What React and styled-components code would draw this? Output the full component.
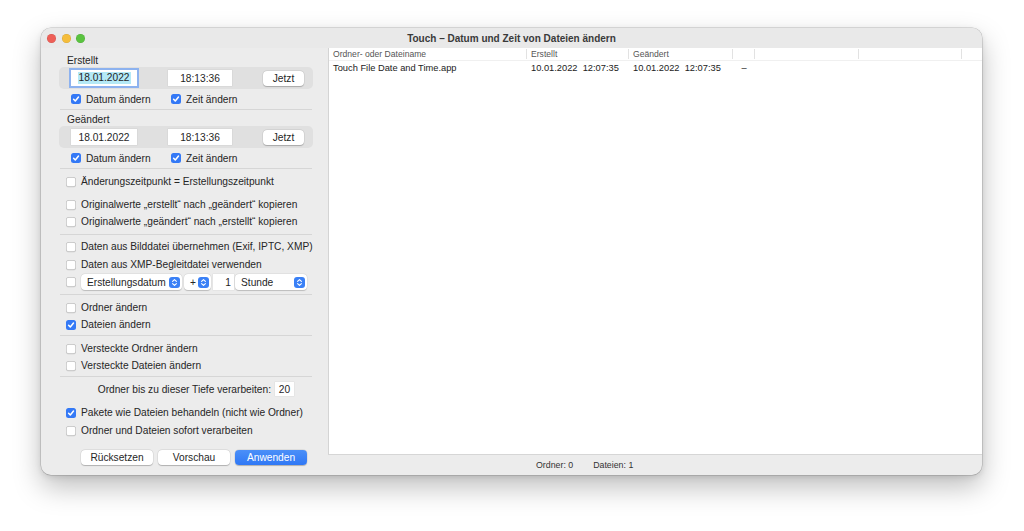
import React from "react";
import styled, { createGlobalStyle } from "styled-components";

const GlobalStyle = createGlobalStyle`
  html, body {
    margin: 0;
    background: #ffffff;
    font-family: "Liberation Sans", Arial, sans-serif;
    color: #262626;
  }
  * { box-sizing: border-box; }
`;

const Page = styled.div`
  width: 1024px;
  height: 531px;
  padding: 28px 0 0 41px;
`;

const Window = styled.div`
  width: 941px;
  height: 447px;
  border-radius: 10px;
  background: #ececec;
  overflow: hidden;
  display: flex;
  flex-direction: column;
  box-shadow: 0 0 0 0.5px rgba(0, 0, 0, 0.22), 0 12px 28px rgba(0, 0, 0, 0.26),
    0 2px 6px rgba(0, 0, 0, 0.1);
`;

const TitleBar = styled.div`
  height: 20px;
  flex: none;
  display: grid;
  grid-template-columns: 1fr auto 1fr;
  align-items: center;
  background: #e9e9e9;
`;

const Lights = styled.div`
  display: flex;
  gap: 5.5px;
  padding-left: 6px;
`;

const Light = styled.span`
  width: 9px;
  height: 9px;
  border-radius: 50%;
  background: ${(p) => p.$color};
  box-shadow: inset 0 0 0 0.5px rgba(0, 0, 0, 0.12);
`;

const Title = styled.div`
  font-size: 10px;
  font-weight: bold;
  color: #3a3a3a;
`;

const Body = styled.div`
  flex: 1;
  display: flex;
  min-height: 0;
`;

const LeftPanel = styled.div`
  width: 287px;
  flex: none;
  padding: 6px 16px 0 19px;
  display: flex;
  flex-direction: column;
  font-size: 10.2px;
`;

const Group = styled.div`
  display: flex;
  flex-direction: column;
  padding-top: ${(p) => p.$pt || 0}px;
  padding-bottom: ${(p) => p.$pb || 0}px;
`;

const Spacer = styled.div`
  height: ${(p) => p.$h}px;
  flex: none;
`;

const Separator = styled.div`
  height: 1px;
  background: #d6d6d6;
  flex: none;
`;

const SectionLabel = styled.div`
  height: 13px;
  line-height: 13px;
  padding-left: 7px;
  margin-top: ${(p) => p.$mt || 0}px;
`;

const FieldBox = styled.div`
  height: 22px;
  margin: 0 -1px;
  background: #e0e0e0;
  border-radius: 5px;
  display: flex;
  align-items: center;
  justify-content: space-between;
  padding: 0 9px 0 12px;
`;

const Field = styled.span`
  width: ${(p) => p.$w}px;
  height: ${(p) => p.$h || 16}px;
  flex: none;
  margin-left: ${(p) => p.$ml || 0}px;
  background: #ffffff;
  display: flex;
  align-items: center;
  justify-content: ${(p) => p.$align || "center"};
  padding: 0 3px;
  font-size: 10.2px;
  color: #1f1f1f;
  box-shadow: ${(p) =>
    p.$focus ? "0 0 0 2px #8db2ef" : "0 0 0 0.5px rgba(0, 0, 0, 0.06)"};
`;

const Selected = styled.span`
  background: #b4e9f6;
  padding: 0 1px;
  line-height: 12px;
`;

const PushButton = styled.span`
  width: ${(p) => p.$w || 41}px;
  height: ${(p) => p.$h || 15}px;
  border-radius: 4px;
  display: flex;
  align-items: center;
  justify-content: center;
  font-size: 10.2px;
  background: ${(p) =>
    p.$primary ? "linear-gradient(#4b8ff8, #2f78f5)" : "#ffffff"};
  color: ${(p) => (p.$primary ? "#ffffff" : "#262626")};
  box-shadow: 0 0.5px 1px rgba(0, 0, 0, 0.22), 0 0 0 0.5px rgba(0, 0, 0, 0.08);
`;

const DateChecks = styled.div`
  height: 20px;
  display: grid;
  grid-template-columns: 100px auto;
  align-items: center;
  padding-left: 11px;
`;

const CheckRow = styled.div`
  height: 17px;
  margin-top: ${(p) => p.$mt || 0}px;
  display: flex;
  align-items: center;
  gap: 5px;
  padding-left: 6px;
  white-space: nowrap;
`;

const CheckLabel = styled.label`
  display: flex;
  align-items: center;
  gap: 5px;
`;

const Box = styled.span`
  width: 10px;
  height: 10px;
  flex: none;
  border-radius: 2.5px;
  display: inline-flex;
  align-items: center;
  justify-content: center;
  background: ${(p) => (p.$checked ? "#3479f6" : "#ffffff")};
  box-shadow: ${(p) =>
    p.$checked
      ? "none"
      : "inset 0 0 0 0.7px #bdbdbd, 0 0.5px 0.5px rgba(0,0,0,0.08)"};
`;

const Select = styled.span`
  width: ${(p) => p.$w}px;
  height: 16px;
  flex: none;
  margin-left: ${(p) => p.$ml || 0}px;
  background: #ffffff;
  border-radius: 4px;
  display: flex;
  align-items: center;
  justify-content: space-between;
  padding: 0 2px 0 6px;
  box-shadow: 0 0.5px 1px rgba(0, 0, 0, 0.18), 0 0 0 0.5px rgba(0, 0, 0, 0.06);
`;

const Stepper = styled.span`
  width: 11px;
  height: 11px;
  border-radius: 3px;
  background: #3a80f6;
  display: inline-flex;
  align-items: center;
  justify-content: center;
`;

const PopupRow = styled.div`
  height: 18px;
  display: flex;
  align-items: center;
  padding-left: 6px;
`;

const DepthRow = styled.div`
  height: 18px;
  display: flex;
  align-items: center;
  justify-content: flex-end;
  gap: 4px;
  padding-right: 18px;
`;

const ButtonRow = styled.div`
  display: flex;
  gap: 5px;
  padding-left: 21px;
  margin-top: 11px;
`;

const RightPanel = styled.div`
  flex: 1;
  display: flex;
  flex-direction: column;
  min-width: 0;
`;

const Table = styled.div`
  flex: 1;
  background: #ffffff;
  border-left: 1px solid #d4d4d4;
  border-bottom: 1px solid #d6d6d6;
`;

const COLS = "198px 102px 104px 22px 104px 103px 1fr";

const HeaderRow = styled.div`
  display: grid;
  grid-template-columns: ${COLS};
  height: 13px;
  align-items: center;
  font-size: 8.6px;
  color: #555555;
  border-bottom: 1px solid #f0f0f0;
`;

const HeaderCell = styled.div`
  height: 10px;
  line-height: 10px;
  padding-left: 4px;
  border-right: ${(p) => (p.$last ? "none" : "1px solid #e2e2e2")};
  white-space: nowrap;
  overflow: hidden;
`;

const DataRow = styled.div`
  display: grid;
  grid-template-columns: ${COLS};
  height: 13px;
  align-items: center;
  font-size: 9.3px;
  color: #222222;
`;

const Cell = styled.div`
  padding-left: ${(p) => (p.$center ? 0 : 4)}px;
  white-space: pre;
  text-align: ${(p) => (p.$center ? "center" : "left")};
`;

const StatusBar = styled.div`
  height: 20px;
  flex: none;
  display: flex;
  align-items: center;
  gap: 20px;
  padding-left: 208px;
  font-size: 8.8px;
  color: #333333;
`;

function Check({ checked }) {
  return (
    <Box $checked={checked}>
      {checked && (
        <svg width="10" height="10" viewBox="0 0 10 10">
          <path
            d="M2.6 5.2 L4.3 7 L7.5 3.1"
            fill="none"
            stroke="#ffffff"
            strokeWidth="1.5"
            strokeLinecap="round"
            strokeLinejoin="round"
          />
        </svg>
      )}
    </Box>
  );
}

function StepIcon() {
  return (
    <Stepper>
      <svg width="11" height="11" viewBox="0 0 11 11">
        <path
          d="M3.6 4.4 L5.5 2.6 L7.4 4.4 M3.6 6.6 L5.5 8.4 L7.4 6.6"
          fill="none"
          stroke="#ffffff"
          strokeWidth="1.1"
          strokeLinecap="round"
          strokeLinejoin="round"
        />
      </svg>
    </Stepper>
  );
}

function DateSection({ label, focus, mt }) {
  return (
    <>
      <SectionLabel $mt={mt}>{label}</SectionLabel>
      <FieldBox>
        <Field $w={66} $focus={focus}>
          {focus ? <Selected>18.01.2022</Selected> : "18.01.2022"}
        </Field>
        <Field $w={64}>18:13:36</Field>
        <PushButton>Jetzt</PushButton>
      </FieldBox>
      <DateChecks>
        <CheckLabel>
          <Check checked />
          Datum ändern
        </CheckLabel>
        <CheckLabel>
          <Check checked />
          Zeit ändern
        </CheckLabel>
      </DateChecks>
    </>
  );
}

function Option({ checked, children, mt }) {
  return (
    <CheckRow $mt={mt}>
      <Check checked={checked} />
      {children}
    </CheckRow>
  );
}

export default function App() {
  return (
    <>
      <GlobalStyle />
      <Page>
        <Window>
          <TitleBar>
            <Lights>
              <Light $color="#ee5f57" />
              <Light $color="#f5bd3b" />
              <Light $color="#5ac33f" />
            </Lights>
            <Title>Touch – Datum und Zeit von Dateien ändern</Title>
            <div />
          </TitleBar>
          <Body>
            <LeftPanel>
              <Group>
                <DateSection label="Erstellt" focus />
              </Group>
              <Separator />
              <Group>
                <DateSection label="Geändert" mt={3} />
              </Group>
              <Separator />
              <Group $pt={4} $pb={4}>
                <Option>Änderungszeitpunkt = Erstellungszeitpunkt</Option>
                <Spacer $h={6} />
                <Option>Originalwerte „erstellt“ nach „geändert“ kopieren</Option>
                <Option>Originalwerte „geändert“ nach „erstellt“ kopieren</Option>
              </Group>
              <Separator />
              <Group $pt={3} $pb={3}>
                <Option>Daten aus Bilddatei übernehmen (Exif, IPTC, XMP)</Option>
                <Option mt={1}>Daten aus XMP-Begleitdatei verwenden</Option>
                <PopupRow>
                  <Check />
                  <Select $w={101} $ml={5}>
                    Erstellungsdatum
                    <StepIcon />
                  </Select>
                  <Select $w={27} $ml={2}>
                    +
                    <StepIcon />
                  </Select>
                  <Field $w={21} $ml={2} $align="flex-end">
                    1
                  </Field>
                  <Select $w={72} $ml={1}>
                    Stunde
                    <StepIcon />
                  </Select>
                </PopupRow>
              </Group>
              <Separator />
              <Group $pt={4} $pb={2}>
                <Option>Ordner ändern</Option>
                <Option checked>Dateien ändern</Option>
              </Group>
              <Separator />
              <Group $pt={4} $pb={2}>
                <Option>Versteckte Ordner ändern</Option>
                <Option>Versteckte Dateien ändern</Option>
              </Group>
              <Separator />
              <Group $pt={3}>
                <DepthRow>
                  Ordner bis zu dieser Tiefe verarbeiten:
                  <Field $w={19} $h={14}>
                    20
                  </Field>
                </DepthRow>
                <Spacer $h={6} />
                <Option checked>Pakete wie Dateien behandeln (nicht wie Ordner)</Option>
                <Option mt={1}>Ordner und Dateien sofort verarbeiten</Option>
                <ButtonRow>
                  <PushButton $w={72}>Rücksetzen</PushButton>
                  <PushButton $w={72}>Vorschau</PushButton>
                  <PushButton $w={72} $primary>
                    Anwenden
                  </PushButton>
                </ButtonRow>
              </Group>
            </LeftPanel>
            <RightPanel>
              <Table>
                <HeaderRow>
                  <HeaderCell>Ordner- oder Dateiname</HeaderCell>
                  <HeaderCell>Erstellt</HeaderCell>
                  <HeaderCell>Geändert</HeaderCell>
                  <HeaderCell />
                  <HeaderCell />
                  <HeaderCell />
                  <HeaderCell $last />
                </HeaderRow>
                <DataRow>
                  <Cell>Touch File Date and Time.app</Cell>
                  <Cell>10.01.2022  12:07:35</Cell>
                  <Cell>10.01.2022  12:07:35</Cell>
                  <Cell $center>–</Cell>
                  <Cell />
                  <Cell />
                  <Cell />
                </DataRow>
              </Table>
              <StatusBar>
                <span>Ordner: 0</span>
                <span>Dateien: 1</span>
              </StatusBar>
            </RightPanel>
          </Body>
        </Window>
      </Page>
    </>
  );
}
